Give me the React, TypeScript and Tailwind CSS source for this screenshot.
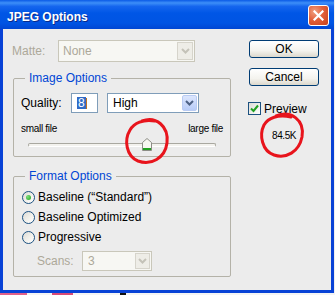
import React from "react";

function Chevron({ color }: { color: string }) {
  return (
    <svg width="9" height="6" viewBox="0 0 9 6">
      <path d="M1 1 L4.5 4.5 L8 1" fill="none" stroke={color} strokeWidth="2" />
    </svg>
  );
}

function Radio({ checked }: { checked?: boolean }) {
  return (
    <div className="w-[13px] h-[13px] rounded-full border border-[#1C5180] bg-[linear-gradient(135deg,#DCDBD5_0%,#F2F1EC_55%,#FFFFFF_100%)] flex items-center justify-center shrink-0">
      {checked && <div className="w-[5px] h-[5px] rounded-full bg-[radial-gradient(circle_at_35%_35%,#7BE07B,#21A121)]" />}
    </div>
  );
}

function XPButton({ label }: { label: string }) {
  return (
    <div className="w-[70px] h-[18px] rounded-[3px] border border-[#003C74] bg-[linear-gradient(to_bottom,#FFFFFF_0%,#F4F3EE_60%,#DCD8CC_100%)] flex items-center justify-center text-[12px] text-black leading-none">
      {label}
    </div>
  );
}

export default function App() {
  return (
    <div className="relative w-[335px] h-[295px] bg-[#EEEEEE] font-['Liberation_Sans',Arial,sans-serif] overflow-hidden">
      <div className="w-[334px] h-[293px] flex flex-col">
        {/* Title bar */}
        <div className="h-[29px] flex justify-between bg-[linear-gradient(to_bottom,#0A5AE6_0%,#3D8FF8_10%,#1566EE_22%,#0056E6_45%,#0054E3_80%,#0046D3_100%)]">
          <div className="pl-[7px] pt-[10px] leading-[14px] text-[12px] font-bold text-white [text-shadow:1px_1px_0_#0A2A8A]">
            JPEG Options
          </div>
          <div className="mt-[5px] mr-[5px] w-[21px] h-[21px] rounded-[3px] border border-white bg-[radial-gradient(circle_at_30%_30%,#F0A080_0%,#E2603A_45%,#C8401A_100%)] flex items-center justify-center">
            <svg width="11" height="11" viewBox="0 0 11 11">
              <path d="M1.5 1.5 L9.5 9.5 M9.5 1.5 L1.5 9.5" stroke="#FFFFFF" strokeWidth="2.2" strokeLinecap="square" />
            </svg>
          </div>
        </div>

        {/* Body */}
        <div className="flex-1 flex bg-[#ECECEC] border-x-[3px] border-b-[3px] border-[#0842D6]">
          {/* Left column */}
          <div className="w-[228px] pl-[9px] pt-[11px] flex flex-col">
            {/* Matte */}
            <div className="h-[22px] flex items-center">
              <div className="w-[46px] text-[12px] text-[#ACA899]">Matte:</div>
              <div className="w-[137px] h-[22px] border border-[#C9C7BA] bg-[#F7F7F3] flex items-stretch">
                <div className="flex-1 flex items-center pl-[4px] text-[12px] text-[#ACA899]">None</div>
                <div className="w-[16px] my-[1px] mr-[1px] ml-[2px] border border-[#D6D4CB] bg-[#EEEDE7] flex items-center justify-center">
                  <Chevron color="#C4C2B8" />
                </div>
              </div>
            </div>

            {/* Image Options */}
            <fieldset className="mt-[9px] ml-[1px] w-[218px] border border-[#B4B2A8] rounded-[2px]">
              <legend className="ml-[11px] px-[4px] text-[12px] leading-[14px] text-[#0046D5]">Image Options</legend>
              <div className="pl-[7px] pr-[7px] pt-[8px] pb-[5px] flex flex-col">
                <div className="h-[20px] flex items-center">
                  <div className="w-[50px] text-[12px] text-black">Quality:</div>
                  <div className="w-[27px] h-[20px] border border-[#7F9DB9] bg-white flex items-center pl-[5px]">
                    <span className="bg-[#316AC5] text-white text-[12px] leading-[12px] px-[1px]">8</span>
                    <span className="w-[1px] h-[11px] bg-[#C07020]" />
                  </div>
                  <div className="ml-[9px] w-[92px] h-[20px] border border-[#7F9DB9] bg-white flex items-stretch">
                    <div className="flex-1 flex items-center pl-[5px] text-[12px] text-black">High</div>
                    <div className="w-[15px] m-[1px] rounded-[2px] border border-[#B9CBF3] bg-[linear-gradient(to_bottom,#DCE6FD,#B8CCF8)] flex items-center justify-center">
                      <Chevron color="#4D6185" />
                    </div>
                  </div>
                </div>
                <div className="mt-[10px] h-[12px] flex justify-between text-[10px] leading-[12px] text-black tracking-[-0.3px]">
                  <span>small file</span>
                  <span>large file</span>
                </div>
                <div className="mt-[3px] h-[13px] ml-[7px] w-[188px] relative flex items-center">
                  <div className="w-full h-[4px] rounded-full border border-[#A9A8A0] border-b-white bg-[#F3F2EE]" />
                  <svg className="absolute left-[114px] top-0" width="10" height="13" viewBox="0 0 10 13">
                    <path d="M0.5 4.5 L5 0.5 L9.5 4.5 V12.5 H0.5 Z" fill="#F7F7F2" stroke="#8C8D86" />
                    <path d="M1 10.5 H9 M1 11.5 H9" stroke="#21A121" />
                  </svg>
                </div>
              </div>
            </fieldset>

            {/* Format Options */}
            <fieldset className="mt-[12px] ml-[1px] w-[218px] border border-[#B4B2A8] rounded-[2px]">
              <legend className="ml-[11px] px-[4px] text-[12px] leading-[14px] text-[#0046D5]">Format Options</legend>
              <div className="pl-[8px] pt-[4px] pb-[5px] flex flex-col text-[12px] text-black">
                <div className="h-[20px] flex items-center gap-[3px]">
                  <Radio checked />
                  <span>Baseline (“Standard”)</span>
                </div>
                <div className="h-[20px] flex items-center gap-[3px]">
                  <Radio />
                  <span>Baseline Optimized</span>
                </div>
                <div className="h-[20px] flex items-center gap-[3px]">
                  <Radio />
                  <span>Progressive</span>
                </div>
                <div className="mt-[4px] h-[20px] pl-[15px] flex items-center">
                  <div className="w-[45px] text-[#ACA899]">Scans:</div>
                  <div className="w-[70px] h-[20px] border border-[#C9C7BA] bg-[#F7F7F3] flex items-stretch">
                    <div className="flex-1 flex items-center pl-[5px] text-[#ACA899]">3</div>
                    <div className="w-[15px] m-[1px] border border-[#D6D4CB] bg-[#EEEDE7] flex items-center justify-center">
                      <Chevron color="#C4C2B8" />
                    </div>
                  </div>
                </div>
              </div>
            </fieldset>
          </div>

          {/* Right column */}
          <div className="pl-[18px] pt-[11px] flex flex-col">
            <XPButton label="OK" />
            <div className="mt-[10px]">
              <XPButton label="Cancel" />
            </div>
            <div className="mt-[16px] -ml-[1px] h-[13px] flex items-center">
              <div className="w-[13px] h-[13px] border border-[#1C5180] bg-[linear-gradient(135deg,#DCDBD5,#FFFFFF)] flex items-center justify-center">
                <svg width="9" height="9" viewBox="0 0 9 9">
                  <path d="M1 4.5 L3.5 7 L8 1.5" fill="none" stroke="#21A121" strokeWidth="2" />
                </svg>
              </div>
              <span className="ml-[3px] text-[12px] text-black">Preview</span>
            </div>
            <div className="mt-[15px] ml-[23px] text-[10px] leading-[12px] text-black tracking-[-0.4px]">84.5K</div>
          </div>
        </div>
      </div>

      {/* bottom strip of background */}
      <div className="h-[2px] flex">
        <div className="w-[27px] bg-[#E0608A]" />
        <div className="w-[25px] bg-[#F4F4F4]" />
        <div className="w-[21px] bg-[#D84A78]" />
        <div className="w-[47px] bg-[#F4F4F4]" />
        <div className="w-[6px] bg-[#111111]" />
        <div className="flex-1 bg-[#F4F4F4]" />
      </div>

      {/* red hand-drawn annotations */}
      <svg className="absolute inset-0 pointer-events-none" width="335" height="295" viewBox="0 0 335 295">
        <path
          d="M142 121 C156 116 169 126 167 143 C165 158 151 166 138 161 C126 156 124 140 130 130 C134 123 143 119 155 121"
          fill="none"
          stroke="#E8141C"
          strokeWidth="3"
          strokeLinecap="round"
        />
        <path
          d="M276 116 C291 110 305 120 302 137 C299 152 286 159 274 155 C262 151 259 135 264 125 C268 118 278 114 291 117"
          fill="none"
          stroke="#E8141C"
          strokeWidth="3"
          strokeLinecap="round"
        />
      </svg>
    </div>
  );
}
